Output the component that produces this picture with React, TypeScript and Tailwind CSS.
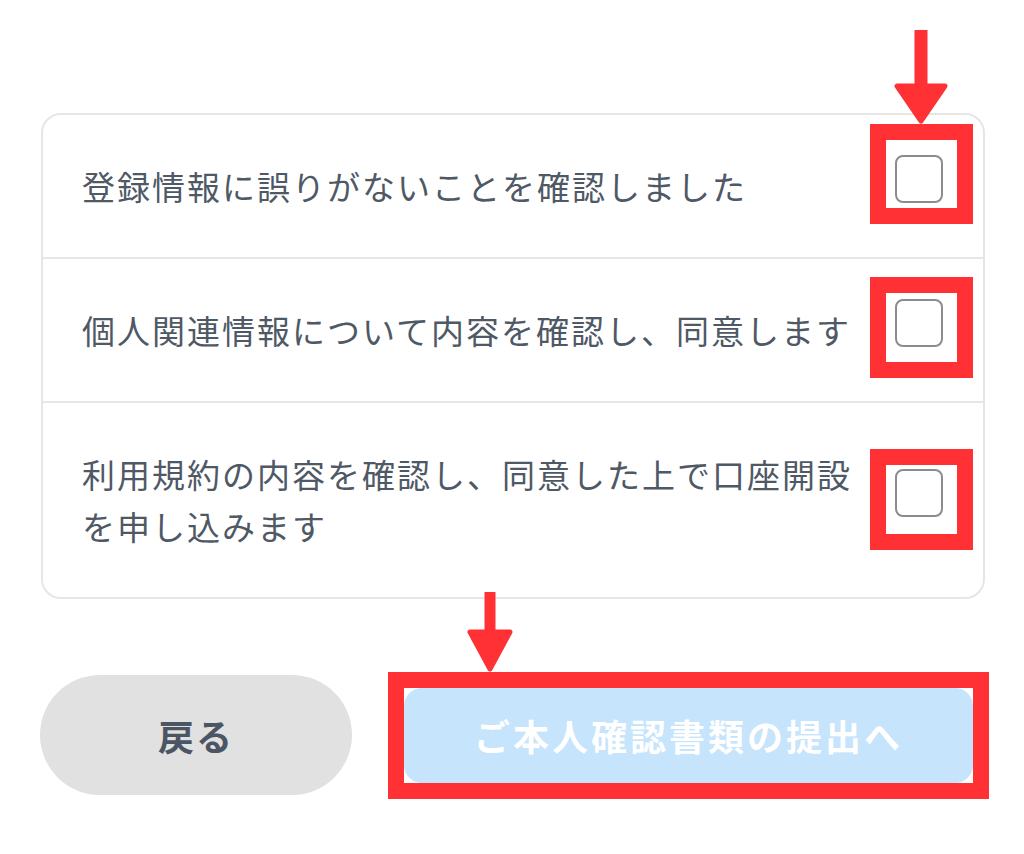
import React from 'react';

// red highlight offsets around each checkbox (top, bottom) as in the annotated shot
const agreements = [
  { text: '登録情報に誤りがないことを確認しました', hl: 'top-[-31px] bottom-[-21px]' },
  { text: '個人関連情報について内容を確認し、同意します', hl: 'top-[-22px] bottom-[-31px]' },
  { text: '利用規約の内容を確認し、同意した上で口座開設を申し込みます', hl: 'top-[-20px] bottom-[-33px]' },
];

const jpFont = { fontFamily: '"Noto Sans CJK JP", "Noto Sans", sans-serif' };

const DownArrow: React.FC<{ w: number; h: number; shaft: number; head: number; className?: string }> = ({ w, h, shaft, head, className }) => {
  const cx = w / 2;
  const headTop = h - head;
  return (
    <svg width={w} height={h} viewBox={`0 0 ${w} ${h}`} className={className}>
      <rect x={cx - shaft / 2} y={0} width={shaft} height={headTop + 2} fill="#ff3135" />
      <polygon
        points={`${3},${headTop} ${w - 3},${headTop} ${cx},${h - 3}`}
        fill="#ff3135"
        stroke="#ff3135"
        strokeWidth={5}
        strokeLinejoin="round"
      />
    </svg>
  );
};

export default function App() {
  return (
    <div className="w-[1024px] h-[854px] bg-white pt-[113px] px-[40px]" style={jpFont}>
      {/* Agreement list */}
      <div className="ml-px w-[944px] rounded-[20px] border-2 border-[#e6e6e6]">
        {agreements.map((item, i) => (
          <div
            key={i}
            className={`flex items-center py-[45px] pl-[39px] pr-[40px] ${i < agreements.length - 1 ? 'border-b-2 border-[#e6e6e6]' : ''}`}
          >
            <p className="flex-1 text-[33px] leading-[52px] tracking-[2px] text-[#4f5966] pr-[30px]">{item.text}</p>
            <div className="relative shrink-0 -translate-y-[7px]">
              <div className="w-12 h-12 rounded-lg border-2 border-[#8c8c8c] bg-white" />
              {/* red highlight */}
              <div className={`absolute left-[-25px] right-[-30px] ${item.hl} border-[16px] border-[#ff3135]`} />
              {i === 0 && (
                <DownArrow w={54} h={94} shaft={13} head={38} className="absolute left-[-1px] -top-[125px]" />
              )}
            </div>
          </div>
        ))}
      </div>

      {/* Actions */}
      <div className="flex items-center mt-[76px]">
        <button className="w-[312px] h-[120px] rounded-full bg-[#e1e1e1] text-[36px] font-bold tracking-[2px] text-[#4b5563]">
          戻る
        </button>
        <div className="relative ml-[52px]">
          <button className="w-[569px] h-[95px] rounded-[18px] bg-[#c6e4fb] text-[36px] font-bold tracking-[3px] text-white">
            ご本人確認書類の提出へ
          </button>
          <div className="absolute -inset-[16px] border-[16px] border-[#ff3135]" />
          <DownArrow w={46} h={80} shaft={11} head={40} className="absolute left-[63px] -top-[96px]" />
        </div>
      </div>
    </div>
  );
}
